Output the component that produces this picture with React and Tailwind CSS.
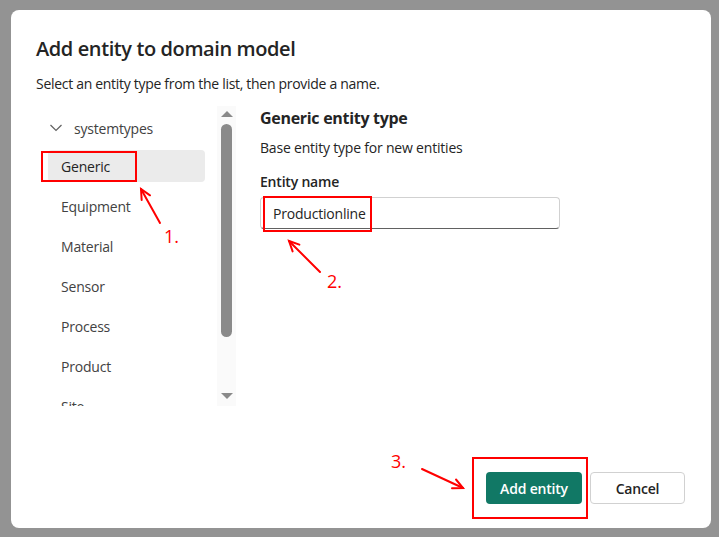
const types = ["Generic", "Equipment", "Material", "Sensor", "Process", "Product", "Site"];

function Arrow({ x1, y1, x2, y2 }) {
    const a = Math.atan2(y2 - y1, x2 - x1);
    const L = 11, s = 0.45;
    const p1 = [x2 - L * Math.cos(a - s), y2 - L * Math.sin(a - s)];
    const p2 = [x2 - L * Math.cos(a + s), y2 - L * Math.sin(a + s)];
    return (
        <g stroke="#f00" strokeWidth="2" fill="none" strokeLinecap="round">
            <line x1={x1} y1={y1} x2={x2} y2={y2} />
            <polyline points={`${p1[0]},${p1[1]} ${x2},${y2} ${p2[0]},${p2[1]}`} />
        </g>
    );
}

function Annotations() {
    return (
        <svg className="absolute inset-0 pointer-events-none" width="719" height="537">
            <rect x="42" y="152" width="94" height="29" fill="none" stroke="#f00" strokeWidth="2" />
            <rect x="264" y="197" width="107" height="34" fill="none" stroke="#f00" strokeWidth="2" />
            <rect x="473" y="458" width="114" height="60" fill="none" stroke="#f00" strokeWidth="2" />
            <Arrow x1={160} y1={223} x2={141} y2={189} />
            <Arrow x1={320} y1={272} x2={289} y2={241} />
            <Arrow x1={422} y1={469} x2={463} y2={488} />
            <text x="164" y="243" fill="#f00" fontSize="18" fontFamily="'Open Sans', sans-serif">1.</text>
            <text x="327" y="288" fill="#f00" fontSize="18" fontFamily="'Open Sans', sans-serif">2.</text>
            <text x="391" y="468" fill="#f00" fontSize="18" fontFamily="'Open Sans', sans-serif">3.</text>
        </svg>
    );
}

export default function App() {
    return (
        <div className="relative w-[719px] h-[537px] bg-[#939393] pt-[10px] pl-[11px] overflow-hidden" style={{ fontFamily: "'Open Sans', sans-serif" }}>
            <div className="w-[700px] h-[518px] bg-white rounded-lg flex flex-col px-[25px] pt-[25px] pb-[24px] text-[#242424]">
                <h2 className="text-[20px] leading-[28px] font-semibold tracking-[-0.4px]">Add entity to domain model</h2>
                <p className="mt-[11px] text-[14px] leading-[20px] tracking-[-0.3px]">Select an entity type from the list, then provide a name.</p>

                <div className="flex mt-[12px]">
                    <div className="w-[200px] h-[300px] flex">
                        <div className="flex-1 pl-[12px] pr-[12px] pt-[6px] overflow-hidden">
                            <div className="h-[32px] flex items-center text-[14px] text-[#424242] tracking-[-0.2px]">
                                <svg width="14" height="8" viewBox="0 0 14 8" className="ml-[1px] mr-[11px]">
                                    <polyline points="1.5,1 7,6.5 12.5,1" fill="none" stroke="#616161" strokeWidth="1.2" />
                                </svg>
                                <span>systemtypes</span>
                            </div>
                            <div className="mt-[6px] flex flex-col gap-[8px]">
                                {types.map((t, i) => (
                                    <div key={t} className={`h-[32px] flex items-center pl-[13px] rounded text-[14px] tracking-[-0.2px] ${i === 0 ? "bg-[#ebebeb] text-[#242424]" : "text-[#424242]"}`}>
                                        {t}
                                    </div>
                                ))}
                            </div>
                        </div>
                        <div className="w-[19px] h-full bg-[#fafafa] flex flex-col items-center">
                            <div className="mt-[5px] w-0 h-0 border-l-[6px] border-r-[6px] border-b-[6px] border-l-transparent border-r-transparent border-b-[#8a8a8a]" />
                            <div className="mt-[7px] w-[11px] h-[213px] rounded-full bg-[#8a8a8a]" />
                            <div className="mt-auto mb-[7px] w-0 h-0 border-l-[6px] border-r-[6px] border-t-[6px] border-l-transparent border-r-transparent border-t-[#8a8a8a]" />
                        </div>
                    </div>

                    <div className="ml-[24px] pt-[1px]">
                        <h3 className="text-[16px] leading-[22px] font-bold tracking-[-0.3px]">Generic entity type</h3>
                        <p className="mt-[9px] text-[14px] leading-[20px] tracking-[-0.2px]">Base entity type for new entities</p>
                        <label className="block mt-[14px] text-[14px] leading-[20px] font-semibold tracking-[-0.2px]">Entity name</label>
                        <div className="mt-[5px] w-[300px] h-[32px] border border-[#d1d1d1] border-b-[#616161] rounded flex items-center px-[12px] text-[14px] tracking-[-0.2px]">
                            Productionline
                        </div>
                    </div>
                </div>

                <div className="mt-auto flex justify-end gap-[8px] pr-[1px]">
                    <button className="w-[96px] h-[32px] rounded bg-[#117865] text-white text-[14px] font-semibold tracking-[-0.2px]">Add entity</button>
                    <button className="w-[95px] h-[32px] rounded border border-[#d1d1d1] bg-white text-[14px] font-semibold text-[#242424] tracking-[-0.2px]">Cancel</button>
                </div>
            </div>
            <Annotations />
        </div>
    );
}
